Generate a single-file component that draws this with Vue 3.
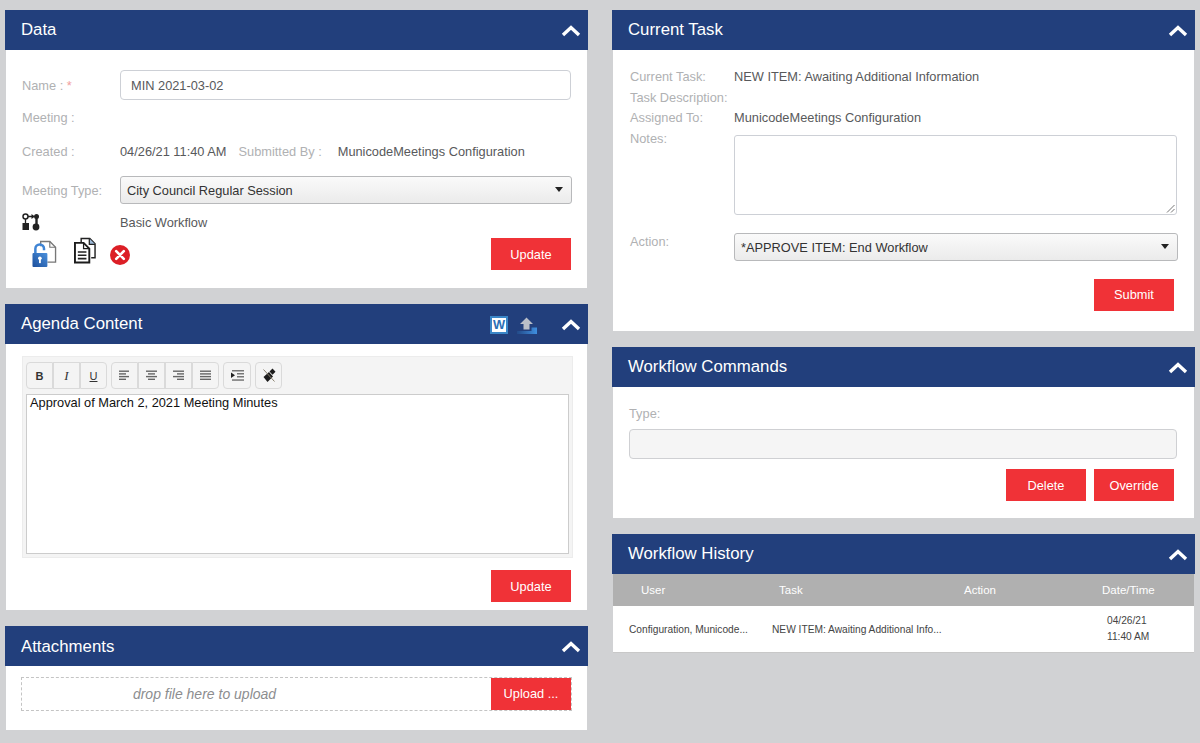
<script setup>
const chevron = 'M2 11 L10 3.5 L18 11'
const toolbarGroups = [
  ['B', 'I', 'U'],
  ['left', 'center', 'right', 'justify'],
  ['indent'],
  ['clear']
]
const alignLines = {
  left: [[0, 10], [0, 7], [0, 10], [0, 7]],
  center: [[0, 11], [2, 7], [0, 11], [2, 7]],
  right: [[0, 11], [4, 7], [0, 11], [4, 7]],
  justify: [[0, 11], [0, 11], [0, 11], [0, 11]]
}
</script>

<template>
  <div class="page">
    <div class="col">
      <section class="panel">
        <header class="phead"><h2>Data</h2><svg class="chev" viewBox="0 0 20 14"><path :d="chevron" /></svg></header>
        <div class="pbody data">
          <div class="row r-name">
            <span class="lbl">Name : <i class="req">*</i></span>
            <div class="fake-input">MIN 2021-03-02</div>
          </div>
          <div class="row r-meeting"><span class="lbl">Meeting :</span></div>
          <div class="row r-created">
            <span class="lbl">Created :</span>
            <span class="val">04/26/21 11:40 AM</span>
            <span class="lbl sub">Submitted By :</span>
            <span class="val">MunicodeMeetings Configuration</span>
          </div>
          <div class="row r-type">
            <span class="lbl">Meeting Type:</span>
            <div class="fake-select">City Council Regular Session<span class="caret"></span></div>
          </div>
          <div class="row r-flow">
            <span class="lbl flowicon">
              <svg width="18" height="18" viewBox="0 0 18 18">
                <circle cx="3.500" cy="3.500" r="2.500" fill="none" stroke="#222" stroke-width="1.500" />
                <path d="M3.500 6v4M6 3.500h5" stroke="#222" stroke-width="1.300" fill="none" />
                <rect x="0.500" y="10" width="6.500" height="7" fill="#222" />
                <path d="M9.500 1l3.500 2.500-3.500 2.500z" fill="#222" />
                <circle cx="14.500" cy="3.500" r="2.500" fill="#222" />
                <path d="M14.500 5v7" stroke="#222" stroke-width="2.400" />
                <circle cx="14" cy="14" r="3.400" fill="#222" />
              </svg>
            </span>
            <span class="val">Basic Workflow</span>
          </div>
          <div class="row r-actions">
            <div class="icons">
              <svg class="ic-lock" width="25" height="28" viewBox="0 0 26 28">
                <defs>
                  <linearGradient id="lockfill" x1="1" y1="0" x2="0" y2="1">
                    <stop offset="0" stop-color="#4a90dc" />
                    <stop offset="1" stop-color="#1c4f9c" />
                  </linearGradient>
                </defs>
                <path d="M9 6V1h9.500l6 6v15.500H16" fill="#fff" stroke="#777" stroke-width="1.400" />
                <path d="M18.500 1v6h6" fill="none" stroke="#777" stroke-width="1.200" />
                <path d="M3.500 13V8.500a4.500 4.500 0 0 1 9 0V10" fill="none" stroke="#3f84d4" stroke-width="2.600" />
                <rect x="0.500" y="13" width="15.500" height="14.500" rx="1" fill="url(#lockfill)" />
                <circle cx="8.200" cy="18.500" r="1.900" fill="#fff" />
                <rect x="7.300" y="19" width="1.900" height="4.500" fill="#fff" />
              </svg>
              <svg class="ic-doc" width="22" height="27" viewBox="0 0 23 27">
                <path d="M7.500 5V1h9l5.500 5.500V21h-4" fill="#fff" stroke="#222" stroke-width="1.500" />
                <path d="M16 1v6h6" fill="#9bb8d8" stroke="#222" stroke-width="1.300" />
                <path d="M1 5.500h9l6 6V26H1z" fill="#fff" stroke="#1c1c1c" stroke-width="2" />
                <path d="M10 5.500v6h6" fill="none" stroke="#1c1c1c" stroke-width="1.300" />
                <path d="M4 15h9M4 18.500h9M4 22h9" stroke="#222" stroke-width="1.600" />
              </svg>
              <svg class="ic-x" width="20" height="20" viewBox="0 0 20 20">
                <circle cx="10" cy="10" r="10" fill="#dc1f26" />
                <path d="M6.200 6.200l7.600 7.600M13.800 6.200l-7.600 7.600" stroke="#fff" stroke-width="2.600" stroke-linecap="round" />
              </svg>
            </div>
            <button class="btn">Update</button>
          </div>
        </div>
      </section>

      <section class="panel">
        <header class="phead">
          <h2>Agenda Content</h2>
          <div class="head-icons">
            <span class="word">W</span>
            <svg width="20" height="17" viewBox="0 0 20 17">
              <defs>
                <linearGradient id="tray" x1="0" y1="0" x2="1" y2="0">
                  <stop offset="0" stop-color="#234a88" />
                  <stop offset="1" stop-color="#3f8fe0" />
                </linearGradient>
              </defs>
              <path d="M9.500 0.500l6.500 6.500h-3.500v5.500h-6V7H3z" fill="#b9bec8" />
              <path d="M0 14h14.500v-3.500H20V17H0z" fill="url(#tray)" />
            </svg>
          </div>
          <svg class="chev" viewBox="0 0 20 14"><path :d="chevron" /></svg>
        </header>
        <div class="pbody agenda">
          <div class="editor">
            <div class="toolbar">
              <div v-for="(g, gi) in toolbarGroups" :key="gi" class="tgroup">
                <span v-for="t in g" :key="t" class="tbtn">
                  <b v-if="t === 'B'">B</b>
                  <em v-else-if="t === 'I'" class="t-i">I</em>
                  <span v-else-if="t === 'U'" class="t-u">U</span>
                  <svg v-else-if="alignLines[t]" width="11" height="11" viewBox="0 0 11 11">
                    <rect v-for="(l, li) in alignLines[t]" :key="li" :x="l[0]" :y="0.500 + li * 2.700" :width="l[1]" height="1.400" fill="#666" />
                  </svg>
                  <svg v-else-if="t === 'indent'" width="13" height="11" viewBox="0 0 13 11">
                    <rect x="1" y="0" width="12" height="1.500" fill="#777" />
                    <rect x="6" y="3" width="7" height="1.500" fill="#777" />
                    <rect x="6" y="6" width="7" height="1.500" fill="#777" />
                    <rect x="1" y="9.300" width="12" height="1.500" fill="#777" />
                    <path d="M0 2.500l4 2.800-4 2.800z" fill="#222" />
                  </svg>
                  <svg v-else width="14" height="15" viewBox="0 0 14 15">
                    <path d="M1.500 9l5.500-5 4 4.500-5.500 5.500z" fill="#1c1c1c" />
                    <path d="M7.500 3.500l3-3 3 3.300-3 3z" fill="#1c1c1c" />
                    <path d="M1.500 1.500l11 12" stroke="#8a8270" stroke-width="1" />
                  </svg>
                </span>
              </div>
            </div>
            <div class="edit-area">Approval of March 2, 2021 Meeting Minutes</div>
          </div>
          <div class="agenda-foot"><button class="btn">Update</button></div>
        </div>
      </section>

      <section class="panel">
        <header class="phead"><h2 class="low">Attachments</h2><svg class="chev" viewBox="0 0 20 14"><path :d="chevron" /></svg></header>
        <div class="pbody attach">
          <div class="dropzone">
            <span class="drop-text">drop file here to upload</span>
            <span class="upload">Upload ...</span>
          </div>
        </div>
      </section>
    </div>

    <div class="col">
      <section class="panel">
        <header class="phead"><h2>Current Task</h2><svg class="chev" viewBox="0 0 20 14"><path :d="chevron" /></svg></header>
        <div class="pbody task">
          <div class="trow h20"><span class="lbl">Current Task:</span><span class="val">NEW ITEM: Awaiting Additional Information</span></div>
          <div class="trow h20"><span class="lbl">Task Description:</span></div>
          <div class="trow h20"><span class="lbl">Assigned To:</span><span class="val">MunicodeMeetings Configuration</span></div>
          <div class="trow notes"><span class="lbl">Notes:</span>
            <div class="fake-area"><svg class="grip" width="9" height="9" viewBox="0 0 9 9"><path d="M8.500 1L1 8.500M8.500 5L5 8.500" stroke="#777" stroke-width="1" fill="none" /></svg></div>
          </div>
          <div class="trow action"><span class="lbl">Action:</span>
            <div class="fake-select wide">*APPROVE ITEM: End Workflow<span class="caret"></span></div>
          </div>
          <div class="task-foot"><button class="btn">Submit</button></div>
        </div>
      </section>

      <section class="panel">
        <header class="phead"><h2>Workflow Commands</h2><svg class="chev" viewBox="0 0 20 14"><path :d="chevron" /></svg></header>
        <div class="pbody cmds">
          <span class="lbl">Type:</span>
          <div class="disabled-input"></div>
          <div class="cmd-foot"><button class="btn">Delete</button><button class="btn">Override</button></div>
        </div>
      </section>

      <section class="panel">
        <header class="phead"><h2>Workflow History</h2><svg class="chev" viewBox="0 0 20 14"><path :d="chevron" /></svg></header>
        <div class="pbody hist">
          <div class="hhead">
            <span>User</span><span>Task</span><span>Action</span><span>Date/Time</span>
          </div>
          <div class="hrow">
            <span>Configuration, Municode...</span>
            <span>NEW ITEM: Awaiting Additional Info...</span>
            <span class="d-date">04/26/21<br />11:40 AM</span>
          </div>
        </div>
      </section>
    </div>
  </div>
</template>

<style>
html, body { margin: 0; background: #d1d2d4; }
</style>

<style scoped>
.page {
  display: flex;
  gap: 24px;
  padding: 10px 0 0 5px;
  height: 733px;
  overflow: hidden;
  background: #d1d2d4;
  font-family: "Liberation Sans", Arial, sans-serif;
  font-size: 12.800px;
  color: #58595b;
}
.col { width: 583px; display: flex; flex-direction: column; gap: 16px; }
.phead {
  height: 40px;
  background: #223f7c;
  color: #fff;
  display: flex;
  align-items: center;
  padding: 0 7px 0 16px;
}
.phead h2 { margin: 0; flex: 1; font-size: 16.800px; font-weight: 400; line-height: 40px; }
.phead h2.low { margin-top: 2px; }
.chev { width: 20px; height: 14px; margin-top: 2px; }
.chev path { fill: none; stroke: #fff; stroke-width: 3.400; }
.pbody { margin: 0 1px; background: #fff; box-sizing: border-box; }
.lbl { color: #b0b1b3; }
.req { color: #f1a0a0; font-style: normal; }
.row { display: flex; align-items: center; }
.row > .lbl:first-child { width: 98px; flex: none; }
.data { height: 238px; padding: 20px 16px 0 16px; }
.r-name { height: 30px; }
.fake-input {
  flex: 1;
  height: 30px;
  box-sizing: border-box;
  border: 1px solid #cdd0d6;
  border-radius: 4px;
  padding: 0 10px;
  line-height: 29px;
}
.r-meeting { height: 34px; }
.r-created { height: 34px; }
.r-created .sub { margin: 0 16px 0 12px; }
.r-type { height: 28px; margin-top: 8px; }
.fake-select {
  position: relative;
  flex: 1;
  height: 28px;
  margin-right: -1px;
  box-sizing: border-box;
  border: 1px solid #b8b9bb;
  border-radius: 3px;
  padding: 0 6px;
  line-height: 27px;
  color: #333;
  background: linear-gradient(#fafafa, #ebebeb);
}
.caret {
  position: absolute;
  right: 8px;
  top: 10px;
  border: 4px solid transparent;
  border-top: 5px solid #222;
  border-bottom: 0;
}
.r-flow { height: 36px; margin-bottom: -2px; }
.flowicon { display: flex; align-items: center; }
.r-actions { justify-content: space-between; height: 32px; }
.icons { display: flex; align-items: flex-start; padding-left: 10px; height: 32px; }
.ic-lock { margin-top: 2px; }
.ic-doc { margin-left: 17px; margin-top: -1px; }
.ic-x { margin-left: 14px; margin-top: 7px; }
.btn {
  width: 80px;
  height: 32px;
  padding: 0;
  border: 0;
  background: #f03237;
  color: #fff;
  font: 12.800px "Liberation Sans", Arial, sans-serif;
}
.head-icons { display: flex; align-items: center; gap: 9px; margin-right: 24px; margin-top: 2px; }
.word {
  width: 18px;
  height: 18px;
  box-sizing: border-box;
  border: 2px solid #3a86c8;
  background: #fff;
  color: #2b6fb6;
  font-weight: 700;
  font-size: 12.800px;
  line-height: 14px;
  text-align: center;
}
.agenda { height: 266px; padding: 12px 14px 0 16px; }
.editor { width: 551px; height: 202px; background: #f4f4f4; border: 1px solid #ececec; box-sizing: border-box; padding: 5px 3px 0 3px; }
.toolbar { display: flex; gap: 4px; height: 28px; }
.tgroup { display: flex; }
.tbtn {
  width: 27px;
  height: 27px;
  box-sizing: border-box;
  border: 1px solid #dadada;
  display: flex;
  align-items: center;
  justify-content: center;
  font-size: 11px;
  color: #333;
  background: #f4f4f4;
}
.tgroup .tbtn:first-child { border-radius: 4px 0 0 4px; }
.tgroup .tbtn:last-child { border-radius: 0 4px 4px 0; }
.tgroup .tbtn:only-child { border-radius: 4px; }
.tgroup:nth-child(3) .tbtn { width: 28px; }
.t-u { text-decoration: underline; }
.t-i { font-family: "Liberation Serif", serif; font-size: 13px; }
.edit-area {
  margin-top: 4px;
  width: 543px;
  height: 160px;
  box-sizing: border-box;
  border: 1px solid #ccc;
  background: #fff;
  color: #111;
  padding: 0 3px;
  line-height: 16px;
}
.agenda-foot { display: flex; justify-content: flex-end; margin-top: 12px; padding-right: 2px; }
.attach { height: 64px; padding: 11px 16px 0 15px; }
.dropzone {
  height: 34px;
  box-sizing: border-box;
  width: 551px;
  border: 1px dashed #c4c4c4;
  display: flex;
  align-items: stretch;
}
.drop-text { flex: 1; padding-right: 104px; text-align: center; font-size: 14px; font-style: italic; color: #8c8d8f; line-height: 32px; }
.upload { width: 80px; background: #f03237; color: #fff; text-align: center; line-height: 32px; }
.task { height: 281px; padding: 16px 16px 0 17px; }
.trow { display: flex; }
.trow > .lbl { width: 104px; flex: none; white-space: nowrap; }
.h20 { height: 20.500px; line-height: 21px; }
.notes { line-height: 20px; height: 87px; }
.notes .lbl { padding-top: 1px; }
.fake-area {
  position: relative;
  width: 443px;
  height: 80px;
  margin-top: 7px;
  box-sizing: border-box;
  border: 1px solid #cdd0d6;
  border-radius: 3px;
}
.grip { position: absolute; right: 1px; bottom: 1px; }
.action { height: 28px; margin-top: 18px; }
.action .lbl { padding-top: 1px; }
.fake-select.wide { flex: none; width: 444px; height: 28px; }
.task-foot { display: flex; justify-content: flex-end; margin-top: 18px; padding-right: 4px; }
.cmds { height: 131px; padding: 19px 20px 0 16px; display: flex; flex-direction: column; }
.disabled-input {
  height: 30px;
  margin-top: 8px;
  box-sizing: border-box;
  border: 1px solid #cfd0d3;
  border-radius: 4px;
  background: #f5f5f5;
  margin-right: -3px;
}
.cmd-foot { display: flex; justify-content: flex-end; gap: 8px; margin-top: 10px; }
.hist { height: 79px; border-bottom: 1px solid #c8c8c8; }
.hhead {
  height: 32px;
  background: #b0b0b0;
  color: #fff;
  font-size: 11.500px;
  line-height: 32px;
  display: grid;
  grid-template-columns: 138px 185px 138px 1fr;
  padding-left: 28px;
}
.hrow {
  height: 46px;
  display: grid;
  grid-template-columns: 143px 335px 1fr;
  align-items: center;
  padding-left: 16px;
  font-size: 10.200px;
  color: #444;
}
.d-date { line-height: 16px; }
</style>
